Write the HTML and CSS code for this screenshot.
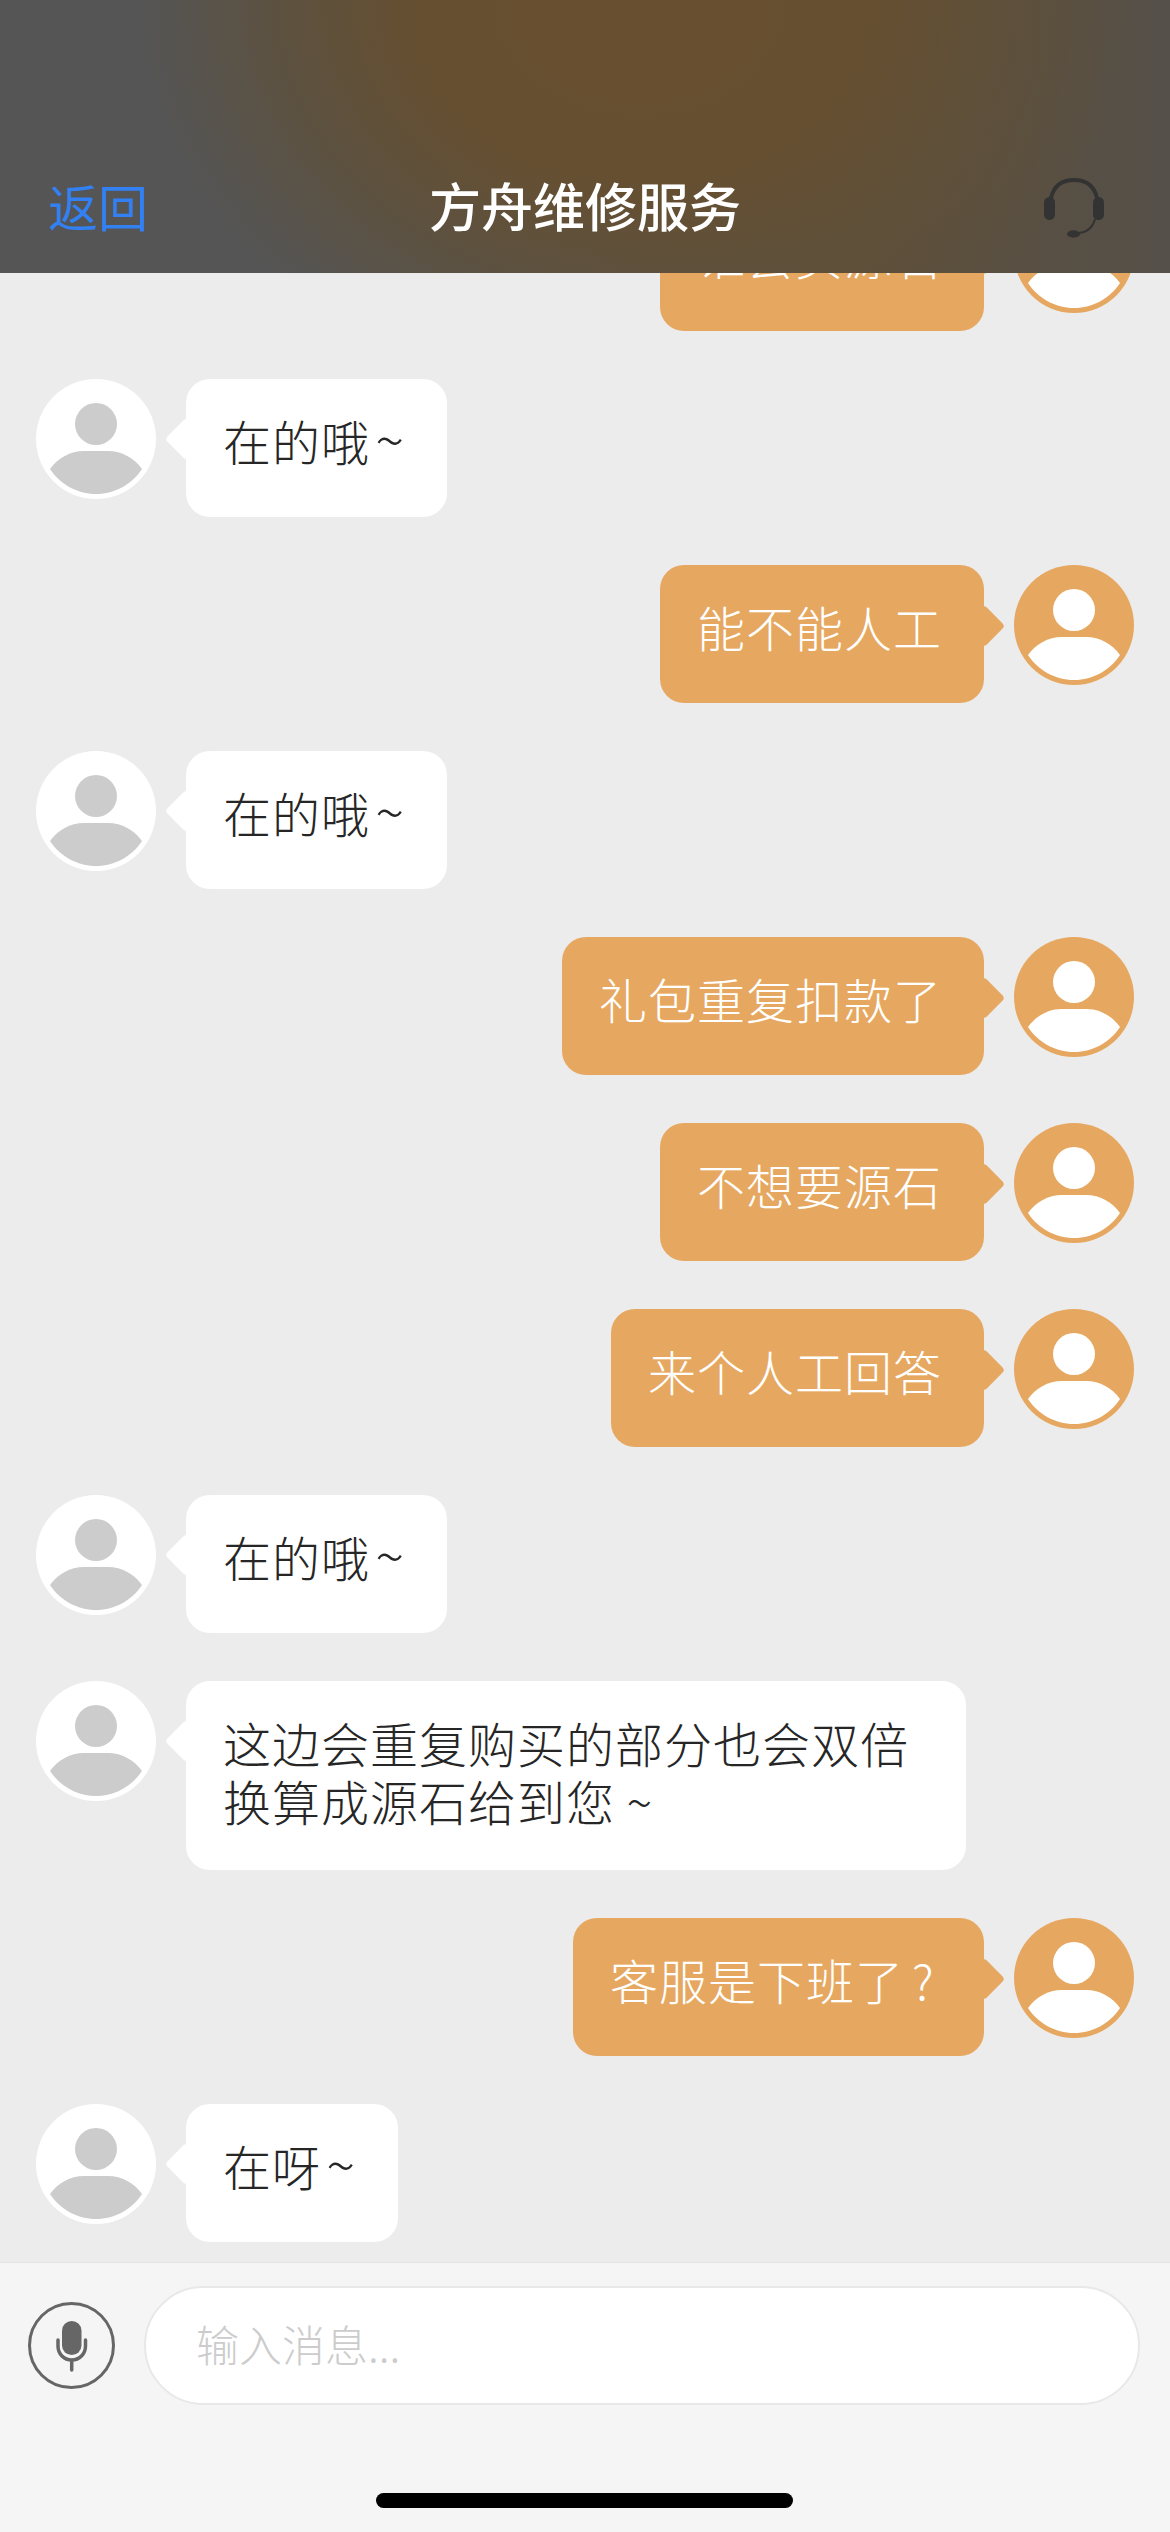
FILE: index.html
```html
<!DOCTYPE html>
<html lang="zh-CN">
  <head>
    <meta charset="UTF-8" />
    <meta name="viewport" content="width=device-width, initial-scale=1.0" />
    <title>方舟维修服务</title>
    <link rel="stylesheet" href="styles.css">
  </head>
  <body>
    <svg class="defs" width="0" height="0">
      <symbol id="person" viewBox="0 0 120 120">
        <circle cx="60" cy="45" r="21" />
        <path d="M14 90 C22 79 34 72 48 72 H72 C86 72 98 79 106 90 C96 105 79 115 60 115 C41 115 24 105 14 90 Z" />
      </symbol>
    </svg>

    <header class="topbar">
      <span class="back">返回</span>
      <h1 class="title">方舟维修服务</h1>
      <svg class="headset" viewBox="0 0 60 60">
        <path class="headset-band" d="M7 20 C10 7 19 2 30 2 C41 2 50 7 53 20" />
        <path class="headset-boom" d="M51 41 C49 49 44 54 35 55" />
        <rect x="0" y="19" width="11" height="23" rx="5.5" />
        <rect x="49" y="19" width="11" height="23" rx="5.5" />
        <ellipse cx="29.5" cy="56" rx="6.5" ry="3.7" />
      </svg>
    </header>

    <main class="chat">
      <div class="msg self">
        <div class="bubble">谁会买源石</div>
        <svg class="avatar"><use href="#person" /></svg>
      </div>
      <div class="msg friend">
        <svg class="avatar"><use href="#person" /></svg>
        <div class="bubble">在的哦<span class="tilde">~</span></div>
      </div>
      <div class="msg self">
        <div class="bubble">能不能人工</div>
        <svg class="avatar"><use href="#person" /></svg>
      </div>
      <div class="msg friend">
        <svg class="avatar"><use href="#person" /></svg>
        <div class="bubble">在的哦<span class="tilde">~</span></div>
      </div>
      <div class="msg self">
        <div class="bubble">礼包重复扣款了</div>
        <svg class="avatar"><use href="#person" /></svg>
      </div>
      <div class="msg self">
        <div class="bubble">不想要源石</div>
        <svg class="avatar"><use href="#person" /></svg>
      </div>
      <div class="msg self">
        <div class="bubble">来个人工回答</div>
        <svg class="avatar"><use href="#person" /></svg>
      </div>
      <div class="msg friend">
        <svg class="avatar"><use href="#person" /></svg>
        <div class="bubble">在的哦<span class="tilde">~</span></div>
      </div>
      <div class="msg friend">
        <svg class="avatar"><use href="#person" /></svg>
        <div class="bubble wide">这边会重复购买的部分也会双倍换算成源石给到您 ~</div>
      </div>
      <div class="msg self">
        <div class="bubble">客服是下班了<span class="question">?</span></div>
        <svg class="avatar"><use href="#person" /></svg>
      </div>
      <div class="msg friend">
        <svg class="avatar"><use href="#person" /></svg>
        <div class="bubble">在呀<span class="tilde">~</span></div>
      </div>
    </main>

    <footer class="composer">
      <div class="composer-row">
        <svg class="mic" viewBox="0 0 87 87">
          <circle class="mic-ring" cx="43.5" cy="43.5" r="42" />
          <rect x="34" y="19" width="19.5" height="34" rx="9.75" />
          <path class="mic-stand" d="M30 38 V44 C30 52 36 58 43.7 58 C51.4 58 57.5 52 57.5 44 V38 M43.7 58 V68" />
        </svg>
        <div class="input-box">输入消息...</div>
      </div>
      <div class="home-bar"></div>
    </footer>
  </body>
</html>
```

FILE: styles.css
```css
* {
  box-sizing: border-box;
}
html,
body {
  margin: 0;
  height: 2532px;
}
body {
  position: relative;
  display: flex;
  flex-direction: column;
  overflow: hidden;
  background-color: #ececec;
  font-family: "Noto Sans CJK SC", "Noto Sans", sans-serif;
}
.defs {
  position: absolute;
}

/* top bar, sits over the scrolled messages */
.topbar {
  position: absolute;
  top: 0;
  left: 0;
  z-index: 2;
  width: 100%;
  height: 273px;
  padding: 136px 48px 0;
  display: grid;
  grid-template-columns: 1fr auto 1fr;
  align-items: center;
  background-color: #555555;
  background-image:
    radial-gradient(ellipse 500px 400px at 640px 0px, #684f2f 0%, #664f31 45%, rgba(96, 80, 55, 0.7) 72%, rgba(85, 85, 85, 0) 100%),
    linear-gradient(90deg, #555555 0%, #555555 50%, #5d4f3b 72%, #555049 100%);
}
.back {
  color: #3280f2;
  font-size: 50px;
}
.title {
  margin: 0;
  color: #ffffff;
  font-size: 52px;
  font-weight: 500;
}
.headset {
  justify-self: end;
  width: 60px;
  height: 60px;
  margin: 6px 18px 0 0;
  fill: #333333;
  overflow: visible;
}
.headset-band {
  fill: none;
  stroke: #333333;
  stroke-width: 4;
}
.headset-boom {
  fill: none;
  stroke: #333333;
  stroke-width: 2;
}

/* messages */
.chat {
  flex: 1;
  min-height: 0;
  padding: 193px 36px 0;
  display: flex;
  flex-direction: column;
  gap: 48px;
}
.msg {
  display: flex;
  align-items: flex-start;
  gap: 30px;
}
.msg.self {
  justify-content: flex-end;
}
.avatar {
  flex: none;
  width: 120px;
  height: 120px;
  border-radius: 50%;
}
.friend .avatar {
  background-color: #ffffff;
  fill: #cccccc;
}
.self .avatar {
  background-color: #e6a861;
  fill: #ffffff;
}
.bubble {
  position: relative;
  min-height: 138px;
  padding: 32px 42px 40px 37px;
  border-radius: 24px;
  font-size: 48px;
  font-weight: 300;
  line-height: 58px;
  letter-spacing: 1px;
}
.bubble.wide {
  width: 780px;
  height: 189px;
}
.bubble::before {
  content: "";
  position: absolute;
  width: 30px;
  height: 30px;
  border-radius: 4px;
  background-color: inherit;
  transform: rotate(45deg);
}
.friend .bubble {
  background-color: #ffffff;
  color: #262626;
}
.friend .bubble::before {
  left: -15px;
  top: 45px;
}
.self .bubble {
  background-color: #e6a861;
  color: #ffffff;
}
.self .bubble::before {
  right: -15px;
  top: 46px;
}
.tilde {
  display: inline-block;
  width: 35px;
  font-size: 54px;
  line-height: 40px;
  text-align: right;
}
.question {
  display: inline-block;
  width: 38px;
  padding-left: 8px;
  text-align: left;
}

/* bottom input */
.composer {
  flex: none;
  height: 270px;
  padding: 23px 30px 0 28px;
  border-top: 1px solid #e3e3e3;
  background-color: #f5f5f5;
}
.composer-row {
  display: flex;
  align-items: center;
  gap: 29px;
}
.mic {
  flex: none;
  width: 87px;
  height: 87px;
  fill: #666666;
}
.mic-ring {
  fill: none;
  stroke: #666666;
  stroke-width: 3;
}
.mic-stand {
  fill: none;
  stroke: #666666;
  stroke-width: 3.5;
  stroke-linecap: round;
}
.input-box {
  flex: 1;
  height: 119px;
  padding: 0 0 6px 50px;
  display: flex;
  align-items: center;
  border: 2px solid #e8e8e8;
  border-radius: 60px;
  background-color: #ffffff;
  color: #cccccc;
  font-size: 43px;
  font-weight: 300;
}
.home-bar {
  width: 417px;
  height: 15px;
  margin: 88px auto 0;
  border-radius: 8px;
  background-color: #000000;
}
```
